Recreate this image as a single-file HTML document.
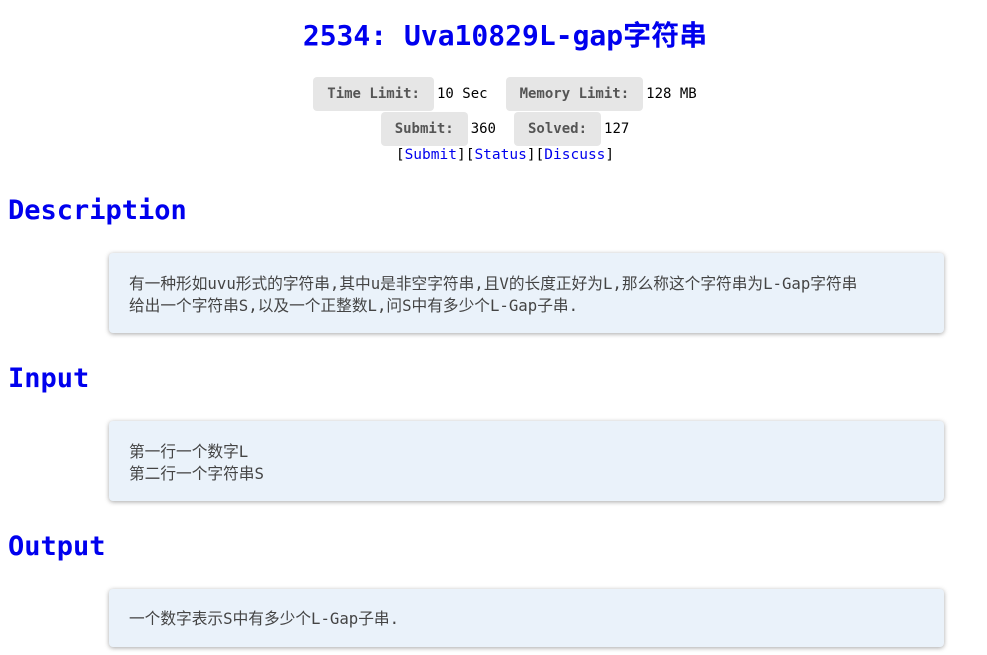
<!DOCTYPE html>
<html><head><meta charset="utf-8"><style>
body{margin:0;background:#fff;font-family:"Liberation Sans","Noto Sans CJK SC",sans-serif;width:987px;height:655px;overflow:hidden;position:relative}
.t{position:absolute;left:0;width:1010px;text-align:center;top:14px;font:bold 28px "DejaVu Sans Mono","Noto Sans CJK SC",monospace;color:#0000ee}
.r{position:absolute;left:0;width:1010px;text-align:center;font:14px "DejaVu Sans Mono","Noto Sans CJK SC",monospace;color:#000}
.l{display:inline-block;background:#e6e6e6;color:#555;font-weight:bold;border-radius:4px;padding:0 14px;height:34px;line-height:34px;margin-right:3px}
.v{margin-right:18px}
a{color:#00e;text-decoration:none}
h2{position:absolute;left:8px;margin:0;font:bold 27px "DejaVu Sans Mono",monospace;color:#0000ee}
.b{position:absolute;left:109px;width:835px;background:#eaf2fa;border-radius:4px;box-shadow:0 1px 5px rgba(0,0,0,.35);box-sizing:border-box;padding:20px 20px;font:15.7px/22px "DejaVu Sans Mono","Noto Sans CJK SC",monospace;color:#444}
</style></head><body>
<div class="t">2534: Uva10829L-gap字符串</div>
<div class="r" style="top:77px"><span class="l">Time Limit:</span><span class="v">10 Sec</span><span class="l">Memory Limit:</span>128 MB</div>
<div class="r" style="top:112px"><span class="l">Submit:</span><span class="v">360</span><span class="l">Solved:</span>127</div>
<div class="r" style="top:147px;font-size:14.5px">[<a>Submit</a>][<a>Status</a>][<a>Discuss</a>]</div>
<h2 style="top:195px">Description</h2>
<div class="b" style="top:253px;height:80px">有一种形如uvu形式的字符串,其中u是非空字符串,且V的长度正好为L,那么称这个字符串为L-Gap字符串<br>给出一个字符串S,以及一个正整数L,问S中有多少个L-Gap子串.</div>
<h2 style="top:363px">Input</h2>
<div class="b" style="top:421px;height:80px">第一行一个数字L<br>第二行一个字符串S</div>
<h2 style="top:531px">Output</h2>
<div class="b" style="top:589px;height:58px;padding-top:19px">一个数字表示S中有多少个L-Gap子串.</div>
</body></html>
